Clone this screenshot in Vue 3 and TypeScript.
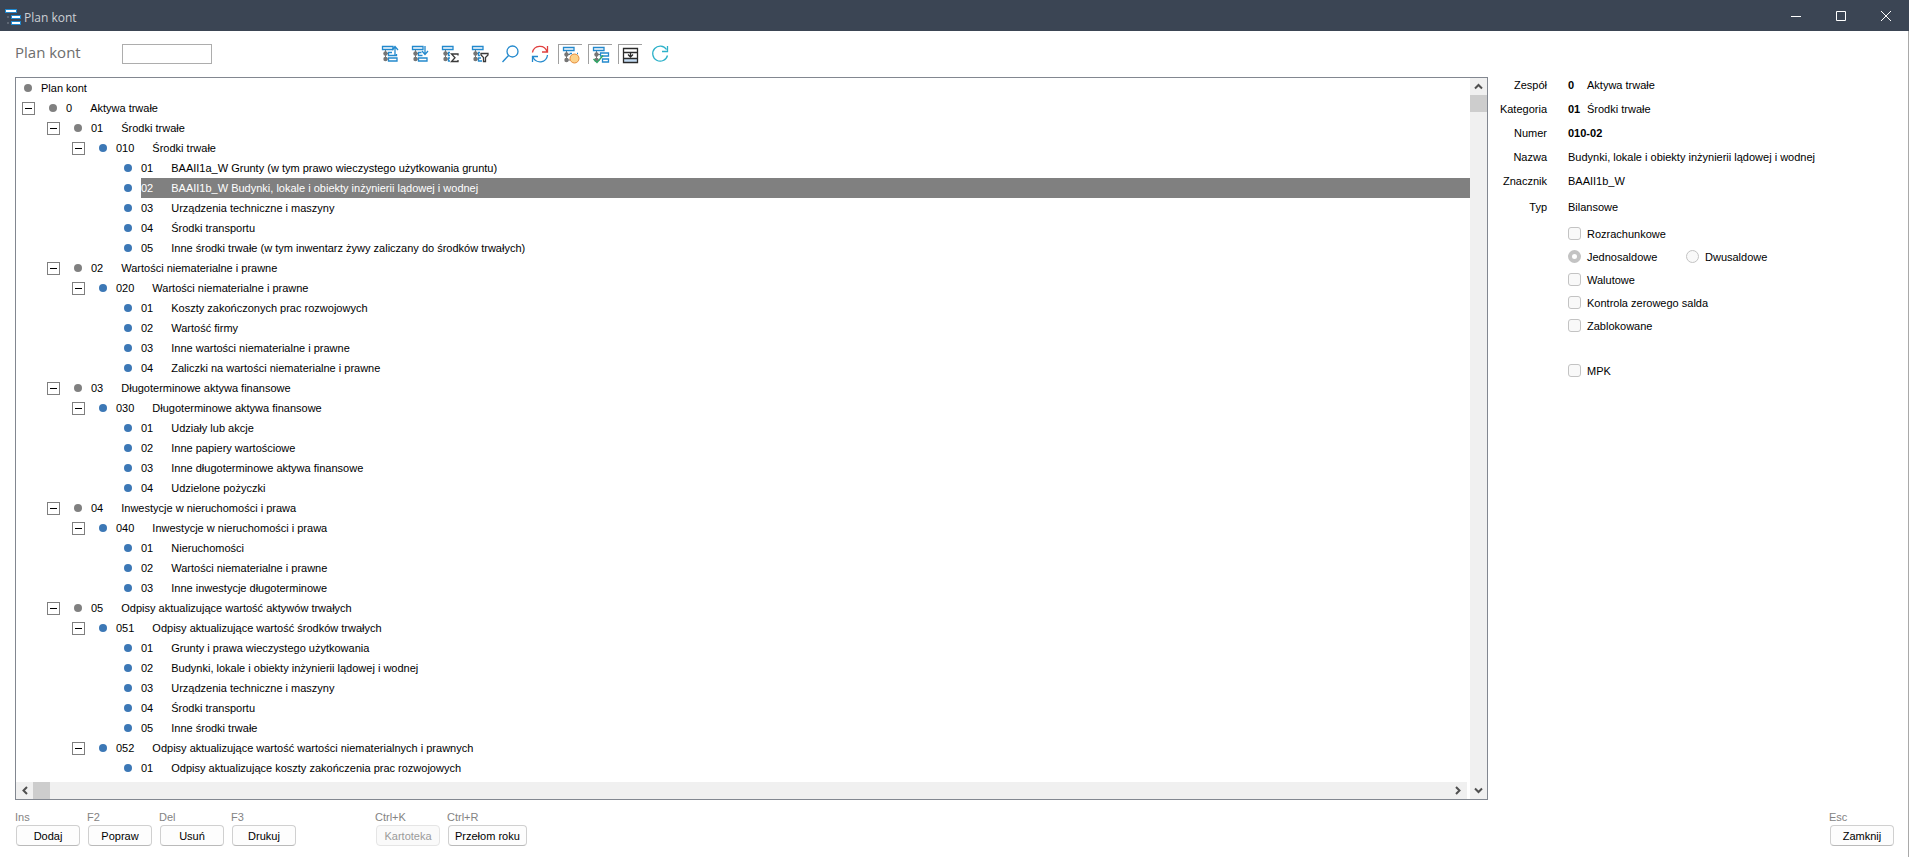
<script setup lang="ts">
import { computed, ref } from 'vue'

interface TreeNode {
  depth: number
  code: string
  label: string
  kind: 'group' | 'account'
}

const node = (depth: number, code: string, label: string): TreeNode => ({
  depth,
  code,
  label,
  kind: depth < 3 ? 'group' : 'account',
})

const nodes: TreeNode[] = [
  node(0, '', 'Plan kont'),
  node(1, '0', 'Aktywa trwałe'),
  node(2, '01', 'Środki trwałe'),
  node(3, '010', 'Środki trwałe'),
  node(4, '01', 'BAAII1a_W Grunty (w tym prawo wieczystego użytkowania gruntu)'),
  node(4, '02', 'BAAII1b_W Budynki, lokale i obiekty inżynierii lądowej i wodnej'),
  node(4, '03', 'Urządzenia techniczne i maszyny'),
  node(4, '04', 'Środki transportu'),
  node(4, '05', 'Inne środki trwałe (w tym inwentarz żywy zaliczany do środków trwałych)'),
  node(2, '02', 'Wartości niematerialne i prawne'),
  node(3, '020', 'Wartości niematerialne i prawne'),
  node(4, '01', 'Koszty zakończonych prac rozwojowych'),
  node(4, '02', 'Wartość firmy'),
  node(4, '03', 'Inne wartości niematerialne i prawne'),
  node(4, '04', 'Zaliczki na wartości niematerialne i prawne'),
  node(2, '03', 'Długoterminowe aktywa finansowe'),
  node(3, '030', 'Długoterminowe aktywa finansowe'),
  node(4, '01', 'Udziały lub akcje'),
  node(4, '02', 'Inne papiery wartościowe'),
  node(4, '03', 'Inne długoterminowe aktywa finansowe'),
  node(4, '04', 'Udzielone pożyczki'),
  node(2, '04', 'Inwestycje w nieruchomości i prawa'),
  node(3, '040', 'Inwestycje w nieruchomości i prawa'),
  node(4, '01', 'Nieruchomości'),
  node(4, '02', 'Wartości niematerialne i prawne'),
  node(4, '03', 'Inne inwestycje długoterminowe'),
  node(2, '05', 'Odpisy aktualizujące wartość aktywów trwałych'),
  node(3, '051', 'Odpisy aktualizujące wartość środków trwałych'),
  node(4, '01', 'Grunty i prawa wieczystego użytkowania'),
  node(4, '02', 'Budynki, lokale i obiekty inżynierii lądowej i wodnej'),
  node(4, '03', 'Urządzenia techniczne i maszyny'),
  node(4, '04', 'Środki transportu'),
  node(4, '05', 'Inne środki trwałe'),
  node(3, '052', 'Odpisy aktualizujące wartość wartości niematerialnych i prawnych'),
  node(4, '01', 'Odpisy aktualizujące koszty zakończenia prac rozwojowych'),
]

const selected = ref(5)
const collapsed = ref<Set<number>>(new Set())
const search = ref('')

const visible = computed(() => {
  const rows: { item: TreeNode; index: number }[] = []
  let hiddenBelow = Infinity
  nodes.forEach((item, index) => {
    if (item.depth > hiddenBelow) return
    hiddenBelow = collapsed.value.has(index) ? item.depth : Infinity
    rows.push({ item, index })
  })
  return rows
})

function toggle(index: number) {
  const next = new Set(collapsed.value)
  if (!next.delete(index)) next.add(index)
  collapsed.value = next
}

const tools = [
  { id: 'up', title: 'Zwiń', tree: true, pressed: false },
  { id: 'down', title: 'Rozwiń', tree: true, pressed: false },
  { id: 'sum', title: 'Suma', tree: true, pressed: false },
  { id: 'filter', title: 'Filtr', tree: true, pressed: false },
  { id: 'search', title: 'Szukaj', tree: false, pressed: false },
  { id: 'swap', title: 'Zamień', tree: false, pressed: false },
  { id: 'mark', title: 'Znaczniki', tree: true, pressed: true },
  { id: 'check', title: 'Aktywne', tree: true, pressed: true },
  { id: 'panel', title: 'Panel', tree: false, pressed: true },
  { id: 'refresh', title: 'Odśwież', tree: false, pressed: false },
]

const details = [
  { name: 'Zespół', code: '0', text: 'Aktywa trwałe' },
  { name: 'Kategoria', code: '01', text: 'Środki trwałe' },
  { name: 'Numer', code: '010-02', text: '' },
  { name: 'Nazwa', code: '', text: 'Budynki, lokale i obiekty inżynierii lądowej i wodnej' },
  { name: 'Znacznik', code: '', text: 'BAAII1b_W' },
  { name: 'Typ', code: '', text: 'Bilansowe' },
]

const actions = [
  { key: 'Ins', label: 'Dodaj' },
  { key: 'F2', label: 'Popraw' },
  { key: 'Del', label: 'Usuń' },
  { key: 'F3', label: 'Drukuj' },
]
</script>

<template>
  <div class="window">
    <header class="titlebar">
      <svg class="app-icon" width="16" height="16" viewBox="0 0 16 16">
        <path d="M0 0h12v4H0zM6 6h10v4H6zM6 12h10v4H6z" fill="#1f86cc" />
        <path d="M1 1h10v2H1zM7 7h8v2H7zM7 13h8v2H7z" fill="#fff" />
        <path d="M2 7h2v2H2zM2 13h2v2H2z" fill="#5d6673" />
      </svg>
      <span class="title">Plan kont</span>
      <div class="controls">
        <button type="button" aria-label="Minimalizuj">
          <svg width="10" height="10" viewBox="0 0 10 10"><path d="M0 5.5h10" /></svg>
        </button>
        <button type="button" aria-label="Maksymalizuj">
          <svg width="10" height="10" viewBox="0 0 10 10"><path d="M.5.5h9v9h-9z" /></svg>
        </button>
        <button type="button" aria-label="Zamknij okno">
          <svg width="10" height="10" viewBox="0 0 10 10"><path d="M0 0l10 10M10 0L0 10" /></svg>
        </button>
      </div>
    </header>

    <div class="body">
      <div class="toolbar">
        <h1>Plan kont</h1>
        <input v-model="search" class="search" type="text" aria-label="Szukaj konta" />
        <div class="tools">
          <button
            v-for="tool in tools"
            :key="tool.id"
            type="button"
            :class="{ pressed: tool.pressed }"
            :aria-label="tool.title"
          >
            <svg width="18" height="18" viewBox="0 0 18 18" fill="none">
              <g v-if="tool.tree">
                <path d="M4.5 5v10M4 8.5h4M4 14h4" stroke="#757575" />
                <circle cx="4.5" cy="8.5" r="2.2" fill="#757575" />
                <circle cx="4.5" cy="14" r="2.2" fill="#757575" />
                <path d="M1.5 1.5h10.500v3H1.500z" stroke="#2389cd" stroke-width="1.3" />
              </g>
              <g v-if="tool.id === 'up'" stroke="#2389cd" stroke-width="1.3">
                <path d="M11 7.5H7.5v3h8V9M7.5 13h8.500v3H7.5z" />
                <path d="M14 10V1.500M11 5l3-3.500L17 5" />
              </g>
              <g v-else-if="tool.id === 'down'" stroke="#2389cd" stroke-width="1.3">
                <path d="M10.500 7.5h-3v3h4M7.5 13h8.500v3H7.5z" />
                <path d="M14 1v8.500M11 6l3 3.500L17 6" />
              </g>
              <g v-else-if="tool.id === 'sum'" stroke-width="1.3">
                <path d="M9 7.5H7.5v3H9M9 13H7.5v3H9" stroke="#2389cd" />
                <path d="M17 10.500V9h-6.500l3.500 3.800-3.500 3.700H17V15" stroke="#3a3a3a" />
              </g>
              <g v-else-if="tool.id === 'filter'" stroke-width="1.3">
                <path d="M9 7.5H7.5v3H9M10 13H7.5v3H11" stroke="#2389cd" />
                <path d="M10 8.500h7V10l-2.500 2.500v4h-2v-4L10 10z" stroke="#3a3a3a" />
              </g>
              <g v-else-if="tool.id === 'search'" stroke="#2389cd" stroke-width="1.3">
                <circle cx="11.500" cy="6.500" r="5.500" />
                <path d="M7.500 10.500L1.500 17" />
              </g>
              <g v-else-if="tool.id === 'swap'" stroke-width="1.3">
                <path d="M1.500 7.500a7.500 7.500 0 0 1 14.500-1M16.500 1v6H11" stroke="#e0403f" />
                <path d="M16.500 10a7.500 7.500 0 0 1-14.500 2M1.500 17v-5.500H7" stroke="#2389cd" />
              </g>
              <g v-else-if="tool.id === 'mark'">
                <path d="M16 7.500h-1M10 7.500H7.500" stroke="#2389cd" stroke-width="1.3" />
                <circle cx="12.500" cy="12.500" r="4.500" fill="#fcd28a" stroke="#e58b3c" />
              </g>
              <g v-else-if="tool.id === 'check'">
                <path d="M16.500 7H8.500v3h8zM16.500 13h-6v3h6z" stroke="#2389cd" stroke-width="1.3" />
                <path d="M1.500 13l3.500 3.500 6-7" stroke="#2fa866" stroke-width="1.500" />
              </g>
              <g v-else-if="tool.id === 'panel'">
                <path d="M2 12h14v4H2z" fill="#c5dcf3" />
                <path d="M1.500 2.500h14v14h-14zM1.500 6.500h14M1.500 12.500h14" stroke="#2b2b2b" stroke-width="1.300" />
                <path d="M8.500 7v4M6 8.500L8.500 11 11 8.500" stroke="#2b2b2b" stroke-width="1.300" />
              </g>
              <g v-else-if="tool.id === 'refresh'" stroke="#2db1c9" stroke-width="1.300">
                <path d="M16.500 10.500a7.500 7.500 0 1 1-1-6M16.500 1v5.500H11" />
              </g>
            </svg>
          </button>
        </div>
      </div>

      <main class="content">
        <section class="tree-box">
          <ul class="tree" role="tree">
            <li
              v-for="{ item, index } in visible"
              :key="index"
              :class="['row', 'depth-' + item.depth]"
              role="treeitem"
              :aria-selected="index === selected"
            >
              <button
                v-if="item.depth > 0 && item.depth < 4"
                class="toggle"
                type="button"
                :class="{ closed: collapsed.has(index) }"
                :aria-label="'Zwiń lub rozwiń ' + item.code"
                @click="toggle(index)"
              ></button>
              <span :class="['dot', item.kind]"></span>
              <span :class="['entry', { selected: index === selected }]" @click="selected = index">
                <span v-if="item.code">{{ item.code }}</span>
                <span>{{ item.label }}</span>
              </span>
            </li>
          </ul>
          <div class="vscroll">
            <svg width="17" height="17" viewBox="0 0 17 17"><path d="M5 10.5L8.5 7l3.5 3.5" /></svg>
            <div class="thumb"></div>
            <svg width="17" height="17" viewBox="0 0 17 17"><path d="M5 6.5L8.5 10 12 6.5" /></svg>
          </div>
          <div class="hscroll">
            <svg width="17" height="17" viewBox="0 0 17 17"><path d="M11 5L7.5 8.5 11 12" /></svg>
            <div class="thumb"></div>
            <svg width="17" height="17" viewBox="0 0 17 17"><path d="M6 5l3.5 3.5L6 12" /></svg>
          </div>
        </section>

        <aside class="details">
          <dl>
            <div v-for="row in details" :key="row.name">
              <dt>{{ row.name }}</dt>
              <dd>
                <b v-if="row.code">{{ row.code }}</b>
                <span v-if="row.text">{{ row.text }}</span>
              </dd>
            </div>
          </dl>
          <div class="flags">
            <label><input type="checkbox" disabled />Rozrachunkowe</label>
            <div class="radios">
              <label><input type="radio" name="saldo" checked disabled />Jednosaldowe</label>
              <label><input type="radio" name="saldo" disabled />Dwusaldowe</label>
            </div>
            <label><input type="checkbox" disabled />Walutowe</label>
            <label><input type="checkbox" disabled />Kontrola zerowego salda</label>
            <label><input type="checkbox" disabled />Zablokowane</label>
            <label class="apart"><input type="checkbox" disabled />MPK</label>
          </div>
        </aside>
      </main>

      <footer class="actions">
        <div v-for="action in actions" :key="action.key" class="action">
          <span>{{ action.key }}</span>
          <button type="button">{{ action.label }}</button>
        </div>
        <div class="action second">
          <span>Ctrl+K</span>
          <button type="button" disabled>Kartoteka</button>
        </div>
        <div class="action">
          <span>Ctrl+R</span>
          <button type="button">Przełom roku</button>
        </div>
        <div class="action last">
          <span>Esc</span>
          <button type="button">Zamknij</button>
        </div>
      </footer>
    </div>
  </div>
</template>

<style>
body {
  margin: 0;
}
</style>

<style scoped>
.window {
  display: flex;
  flex-direction: column;
  min-height: 100vh;
  box-sizing: border-box;
  background: #fff;
  color: #000;
  font: 11px/20px "Liberation Sans", Arial, sans-serif;
}
button {
  font: inherit;
  color: inherit;
  padding: 0;
  cursor: pointer;
}
.titlebar {
  display: flex;
  align-items: center;
  height: 31px;
  padding-left: 5px;
  background: #3b4554;
  color: #ccd0d5;
}
.app-icon {
  margin-top: 3px;
}
.title {
  margin: 4px 0 0 3px;
  font: 12px/18px "Open Sans", "Noto Sans", sans-serif;
}
.controls {
  display: flex;
  height: 100%;
  margin-left: auto;
  padding-right: 1px;
}
.controls button {
  display: flex;
  align-items: center;
  justify-content: center;
  width: 45px;
  border: 0;
  background: none;
}
.controls svg {
  fill: none;
  stroke: #fff;
}
.body {
  flex: 1;
  display: flex;
  flex-direction: column;
  border-right: 1px solid #a9a9a9;
  padding: 0 14px 11px 15px;
}
.toolbar {
  display: flex;
  align-items: center;
  height: 46px;
}
h1 {
  width: 107px;
  margin: 0;
  padding-bottom: 4px;
  color: #6d6d6d;
  font: 500 15px/20px "Open Sans", "Noto Sans", sans-serif;
}
.search {
  box-sizing: border-box;
  width: 90px;
  height: 20px;
  border: 1px solid #adadad;
  padding: 0 4px;
  font: inherit;
}
.tools {
  display: flex;
  gap: 6px;
  margin-left: 166px;
}
.tools button {
  display: flex;
  align-items: center;
  justify-content: center;
  box-sizing: border-box;
  width: 24px;
  height: 20px;
  border: 0;
  background: none;
}
.tools .pressed {
  border: solid #a0a0a0;
  border-width: 1px 0 0 1px;
  padding: 1px 0 0 1px;
}
.content {
  flex: 1;
  display: flex;
  align-items: stretch;
}
.tree-box {
  flex: 1;
  display: grid;
  grid-template: 1fr 17px / 1fr 3px 17px;
  border: 1px solid #828790;
}
.tree {
  grid-area: 1 / 1 / 2 / 3;
  margin: 0;
  padding: 0 0 4px;
  list-style: none;
}
.row {
  display: flex;
  align-items: center;
  height: 20px;
}
.depth-0 { padding-left: 8px; }
.depth-1 { padding-left: 6px; }
.depth-2 { padding-left: 31px; }
.depth-3 { padding-left: 56px; }
.depth-4 { padding-left: 108px; }
.toggle {
  display: grid;
  place-items: center;
  box-sizing: border-box;
  width: 13px;
  height: 13px;
  margin-right: 14px;
  border: 1px solid #7f7f7f;
  background: #fff;
}
.toggle::before,
.toggle.closed::after {
  content: "";
  grid-area: 1 / 1;
  width: 7px;
  height: 1px;
  background: #000;
}
.toggle.closed::after {
  width: 1px;
  height: 7px;
}
.dot {
  width: 8px;
  height: 8px;
  margin-right: 9px;
  border-radius: 50%;
}
.group { background: #808080; }
.account { background: #3c78b6; }
.entry {
  flex: 1;
  display: flex;
  gap: 18px;
  white-space: nowrap;
}
.selected {
  background: #808080;
  color: #fff;
}
.vscroll {
  grid-area: 1 / 3 / 3 / 4;
  display: flex;
  flex-direction: column;
  background: #f0f0f0;
}
.hscroll {
  grid-area: 2 / 1;
  display: flex;
  background: #f0f0f0;
}
.thumb {
  width: 17px;
  height: 17px;
  background: #cdcdcd;
}
.vscroll svg,
.hscroll svg {
  fill: none;
  stroke: #505050;
  stroke-width: 2;
}
.vscroll svg:last-child { margin-top: auto; }
.hscroll svg:last-child { margin-left: auto; }
.details {
  box-sizing: border-box;
  width: 406px;
  padding-top: 3px;
}
dl {
  margin: 0;
  line-height: 10px;
}
dl div {
  display: grid;
  grid-template-columns: 59px 1fr;
  gap: 21px;
  height: 24px;
}
dl div:last-child {
  height: 20px;
  padding-top: 2px;
}
dt,
dd {
  margin: 0;
}
dt {
  text-align: right;
}
dd {
  display: flex;
}
dd b:not(:last-child) {
  width: 19px;
}
.flags {
  padding-left: 80px;
}
.flags label {
  display: flex;
  align-items: center;
  gap: 6px;
  height: 23px;
}
.flags .apart {
  margin-top: 22px;
}
.radios {
  display: flex;
}
.radios label {
  width: 118px;
}
.flags input {
  appearance: none;
  box-sizing: border-box;
  width: 13px;
  height: 13px;
  margin: 0;
  border: 1px solid #c3c3c3;
  border-radius: 3px;
  background: #f9f9f9;
}
.flags input[type="radio"] {
  border-radius: 50%;
}
.flags input[type="radio"]:checked {
  border: 4px solid #c3c3c3;
  background: #fff;
}
.actions {
  display: flex;
  gap: 7px;
  padding-top: 9px;
}
.action {
  display: flex;
  flex-direction: column;
  color: #838383;
  line-height: 16px;
}
.action button {
  box-sizing: border-box;
  min-width: 64px;
  height: 21px;
  margin-left: 1px;
  padding: 0 6px;
  border: 1px solid #d0d0d0;
  border-bottom-color: #bababa;
  border-radius: 4px;
  background: #fdfdfd;
  color: #000;
}
.action button:disabled {
  border-color: #e5e5e5;
  background: #fafafa;
  color: #9a9a9a;
}
.second {
  margin-left: 72px;
}
.last {
  margin-left: auto;
}
</style>
